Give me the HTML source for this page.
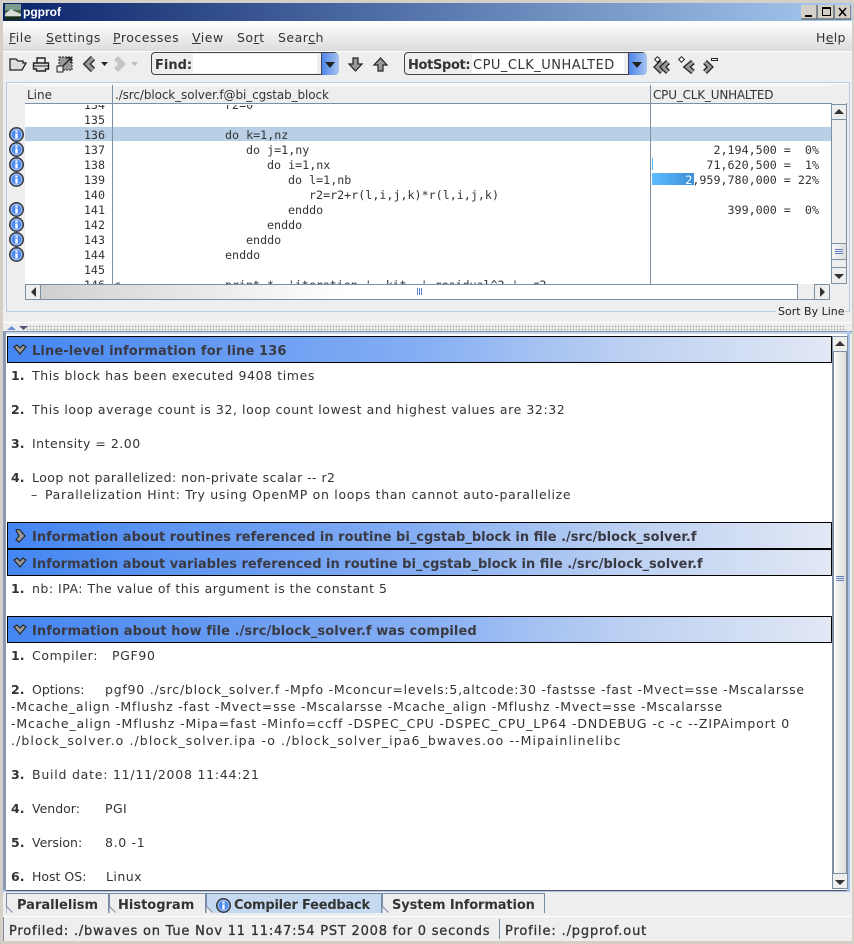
<!DOCTYPE html>
<html><head><meta charset="utf-8"><style>
html,body{margin:0;padding:0;background:#eee}
#w{position:relative;width:854px;height:944px;overflow:hidden;background:#eeeeee;font-family:"DejaVu Sans",sans-serif;font-size:12.5px;color:#333}
.a{position:absolute}
.t{position:absolute;white-space:pre;line-height:16px}
.m{font-family:"DejaVu Sans Mono",monospace;font-size:11.7px;color:#333}
.n{width:50px;text-align:right;left:55px}
.b{font-weight:bold}
.h{position:absolute;left:7px;width:823px;height:25px;border:1px solid #000;background:linear-gradient(90deg,#4486f2 0,#85aef3 50%,#bcd0f2 75%,#e2e8f4 100%);}
.h span{position:absolute;left:24px;top:7px;font-weight:bold;font-size:13px;color:#3a3a44;white-space:pre;line-height:16px}
.u{text-decoration:underline}
.sb{position:absolute;background:#eee;border:1px solid #7d8fa0;box-sizing:border-box}
.tab{position:absolute;top:893px;height:20px;border:1px solid #7a8ca5;border-bottom:0;box-sizing:border-box;font-weight:bold;font-size:13px;color:#333;line-height:24px;white-space:pre;background:#eee;overflow:hidden}
</style></head><body><div id="w">
<!-- frame -->
<div class="a" style="left:0;top:0;width:854px;height:3px;background:#d4d0c8"></div>
<div class="a" style="left:0;top:0;width:3px;height:944px;background:#d4d0c8"></div>
<div class="a" style="right:0;top:0;width:2px;height:944px;background:#d4d0c8"></div>
<div class="a" style="left:0;top:941px;width:854px;height:3px;background:#d4d0c8"></div>
<!-- title -->
<div class="a" style="left:3px;top:3px;width:849px;height:18px;background:linear-gradient(90deg,#0a246a,#a6caf0)"></div>
<svg class="a" style="left:5px;top:4px" width="16" height="16"><rect width="16" height="16" fill="#4a6a50"/><rect width="16" height="6" fill="#7d9a90"/><path d="M0 10L6 5l3 2 7 3v2H0z" fill="#d8dcd8"/><rect y="13" width="16" height="3" fill="#1a2a20"/></svg>
<div class="t b" style="left:23px;top:4px;color:#fff;font-size:12px;font-family:'Liberation Sans',sans-serif">pgprof</div>
<svg class="a" style="left:801px;top:5px" width="50" height="15"><g fill="#d4d0c8"><rect x="0" y="0" width="16" height="14"/><rect x="17" y="0" width="16" height="14"/><rect x="34" y="0" width="16" height="14"/></g><path d="M4 10h7v2H4z" fill="#000"/><path d="M21.500 2.500h8v8h-8z" fill="none" stroke="#000"/><path d="M21 2h9v2h-9z" fill="#000"/><path d="M38 3l7 8M45 3l-7 8" stroke="#000" stroke-width="1.600"/><path d="M0 14h16V0M17 14h16V0M34 14h16V0" fill="none" stroke="#404040"/></svg>
<!-- menu -->
<div class="a" style="left:3px;top:21px;width:849px;height:30px;background:linear-gradient(180deg,#fff,#dcdcdc)"></div>
<div class="t" style="left:9px;top:30px;letter-spacing:.5px"><span class="u">F</span>ile</div>
<div class="t" style="left:46px;top:30px;letter-spacing:.45px"><span class="u">S</span>ettings</div>
<div class="t" style="left:113px;top:30px;letter-spacing:.5px"><span class="u">P</span>rocesses</div>
<div class="t" style="left:192px;top:30px;letter-spacing:.5px"><span class="u">V</span>iew</div>
<div class="t" style="left:237px;top:30px;letter-spacing:.5px">So<span class="u">r</span>t</div>
<div class="t" style="left:278px;top:30px;letter-spacing:.5px">Sear<span class="u">c</span>h</div>
<div class="t" style="left:816px;top:30px;letter-spacing:.3px">H<span class="u">e</span>lp</div>
<!-- toolbar -->
<div class="a" style="left:3px;top:51px;width:849px;height:1px;background:#fff"></div>
<svg class="a" style="left:0;top:48px" width="150" height="34">
<path d="M10 22V11h6l2 2h5v2h3l-4 7z" fill="#ddd" stroke="#222" stroke-width="1.300"/>
<path d="M37 15V10h8v5" fill="#eee" stroke="#222" stroke-width="1.400"/>
<path d="M33.500 15h15v6h-3v2h-9v-2h-3z" fill="#ddd" stroke="#222" stroke-width="1.400"/>
<path d="M34 18h14" stroke="#222"/>
<rect x="59" y="9" width="13" height="13" fill="#999" stroke="#222" stroke-dasharray="2 1"/><rect x="57" y="18" width="6" height="6" fill="#eee" stroke="#222"/><path d="M63 18l8-8M66 10h5v5" stroke="#222" fill="none" stroke-width="1.300"/>
<polyline points="93,10 87,16 93,22" fill="none" stroke="#222" stroke-width="6"/>
<polyline points="93,10 87,16 93,22" fill="none" stroke="#999" stroke-width="3.500"/>
<path d="M101 14h7l-3.500 4z" fill="#223"/>
<polyline points="116,10 122,16 116,22" fill="none" stroke="#c4c4c4" stroke-width="5.500"/>
<path d="M131 14h7l-3.500 4z" fill="#bbb"/>
</svg>
<div class="a" style="left:151px;top:52px;width:187px;height:23px;border:1px solid #444;border-radius:4px;box-sizing:border-box;background:#eee"></div>
<div class="a" style="left:193px;top:54px;width:124px;height:19px;background:#fff"></div>
<div class="t b" style="left:155px;top:58px;font-size:13px;color:#333">Find:</div>
<div class="a" style="left:321px;top:53px;width:17px;height:22px;background:linear-gradient(90deg,#4d87ea,#a9c4f0);border-left:1px solid #445;border-radius:0 4px 4px 0"></div>
<svg class="a" style="left:321px;top:53px" width="18" height="22"><path d="M4 9h10l-5 6z" fill="#222"/></svg>
<svg class="a" style="left:346px;top:55px" width="44" height="20">
<path d="M7 3h5v6h4l-6.500 7-6.500-7h4z" fill="#999" stroke="#222" stroke-width="1.200"/>
<path d="M32 16h5v-6h4l-6.500-7-6.500 7h4z" fill="#999" stroke="#222" stroke-width="1.200"/>
</svg>
<div class="a" style="left:404px;top:52px;width:242px;height:23px;border:1px solid #444;border-radius:4px;box-sizing:border-box;background:#eee"></div>
<div class="a" style="left:472px;top:54px;width:152px;height:19px;background:#fff"></div>
<div class="t b" style="left:408px;top:58px;font-size:13px;color:#333;letter-spacing:-.35px">HotSpot:</div>
<div class="t" style="left:473px;top:58px;font-size:13px;letter-spacing:.5px">CPU_CLK_UNHALTED</div>
<div class="a" style="left:628px;top:53px;width:18px;height:22px;background:linear-gradient(90deg,#4d87ea,#a9c4f0);border-left:1px solid #445;border-radius:0 4px 4px 0"></div>
<svg class="a" style="left:628px;top:53px" width="18" height="22"><path d="M4 9h10l-5 6z" fill="#222"/></svg>
<svg class="a" style="left:652px;top:54px" width="70" height="22">
<g fill="none" stroke="#222" stroke-width="5.500"><polyline points="10,8 5,13 10,18"/><polyline points="16,8 11,13 16,18"/><polyline points="41,8 35,13 41,18"/><polyline points="53,8 58,13 53,18"/></g>
<g fill="none" stroke="#999" stroke-width="3"><polyline points="10,8 5,13 10,18"/><polyline points="16,8 11,13 16,18"/><polyline points="41,8 35,13 41,18"/><polyline points="53,8 58,13 53,18"/></g>
<rect x="3.500" y="3.500" width="4" height="4" fill="#fff" stroke="#222" transform="rotate(45 5.500 5.500)"/>
<rect x="27.500" y="3.500" width="4" height="4" fill="#fff" stroke="#222" transform="rotate(45 29.500 5.500)"/>
<rect x="59.500" y="4.500" width="6" height="2" fill="#fff" stroke="#222"/>
</svg>
<!-- upper panel -->
<div class="a" style="left:6px;top:82px;width:844px;height:230px;border:1px solid #b7cde0;box-sizing:border-box"></div>
<div class="a" style="left:7px;top:83px;width:842px;height:1px;background:#fff"></div>
<div class="a" style="left:25px;top:85px;width:806px;background:#eee;border-bottom:1px solid #7d8fa0;border-top:1px solid #fff;box-sizing:border-box;height:19px"></div>
<div class="a" style="left:25px;top:104px;width:806px;height:180px;background:#fff"></div>
<div class="a" style="left:25px;top:127px;width:806px;height:14px;background:#b8cfe6"></div>
<div class="a" style="left:112px;top:85px;width:1px;height:199px;background:#7d8fa0"></div>
<div class="a" style="left:650px;top:85px;width:1px;height:199px;background:#7d8fa0"></div>
<div class="t" style="left:27px;top:87px;font-size:12px">Line</div>
<div class="t" style="left:115px;top:87px;font-size:12px;letter-spacing:-.1px">./src/block_solver.f@bi_cgstab_block</div>
<div class="t" style="left:653px;top:87px;font-size:12px;letter-spacing:-.2px">CPU_CLK_UNHALTED</div>
<!-- code rows clip -->
<div class="a" style="left:25px;top:105px;width:806px;height:179px;overflow:hidden">
<div class="t m n" style="left:30px;top:-8px">134</div><div class="t m" style="left:200px;top:-8px">r2=0</div>
<div class="t m n" style="left:30px;top:7px">135</div>
<div class="t m n" style="left:30px;top:22px">136</div><div class="t m" style="left:200px;top:22px">do k=1,nz</div>
<div class="t m n" style="left:30px;top:37px">137</div><div class="t m" style="left:221px;top:37px">do j=1,ny</div>
<div class="t m n" style="left:30px;top:52px">138</div><div class="t m" style="left:242px;top:52px">do i=1,nx</div>
<div class="t m n" style="left:30px;top:67px">139</div><div class="t m" style="left:263px;top:67px">do l=1,nb</div>
<div class="t m n" style="left:30px;top:82px">140</div><div class="t m" style="left:284px;top:82px">r2=r2+r(l,i,j,k)*r(l,i,j,k)</div>
<div class="t m n" style="left:30px;top:97px">141</div><div class="t m" style="left:263px;top:97px">enddo</div>
<div class="t m n" style="left:30px;top:112px">142</div><div class="t m" style="left:242px;top:112px">enddo</div>
<div class="t m n" style="left:30px;top:127px">143</div><div class="t m" style="left:221px;top:127px">enddo</div>
<div class="t m n" style="left:30px;top:142px">144</div><div class="t m" style="left:200px;top:142px">enddo</div>
<div class="t m n" style="left:30px;top:157px">145</div>
<div class="t m n" style="left:30px;top:172px">146</div><div class="t m" style="left:89px;top:172px">c</div><div class="t m" style="left:200px;top:172px;letter-spacing:-.05px">print *, 'iteration ', kit, ' residual^2 ', r2</div>
<div class="a" style="left:627px;top:68px;width:42px;height:12px;background:linear-gradient(90deg,#5cbcff,#3f8fd8)"></div>
<div class="a" style="left:627px;top:53px;width:1px;height:12px;background:#5cbcff"></div>
</div>
<div class="t m" style="left:600px;top:142px;width:219px;text-align:right">2,194,500 =  0%</div>
<div class="t m" style="left:600px;top:157px;width:219px;text-align:right">71,620,500 =  1%</div>
<div class="t m" style="left:600px;top:172px;width:219px;text-align:right"><span style="color:#fff">2</span>,959,780,000 = 22%</div>
<div class="t m" style="left:600px;top:202px;width:219px;text-align:right">399,000 =  0%</div>
<!-- gutter icons -->
<svg class="a" style="left:0;top:0;overflow:visible" width="30" height="270">
<defs><g id="ic"><circle cx="7.500" cy="7.500" r="6.800" fill="#4a86f0" stroke="#3a3a3a" stroke-width="1.400"/><circle cx="7.500" cy="7.500" r="5.300" fill="#4d8af2" stroke="#c0cce4" stroke-width=".8"/><rect x="6.300" y="6.500" width="2.400" height="5" fill="#fff"/><rect x="6.300" y="3.500" width="2.400" height="2" fill="#fff"/></g></defs>
<use href="#ic" x="9" y="127"/><use href="#ic" x="9" y="142"/><use href="#ic" x="9" y="157"/><use href="#ic" x="9" y="172"/><use href="#ic" x="9" y="202"/><use href="#ic" x="9" y="217"/><use href="#ic" x="9" y="232"/><use href="#ic" x="9" y="247"/>
</svg>
<!-- v scrollbar upper -->
<div class="a" style="left:831px;top:103px;width:16px;height:181px;background:#eee;border-right:1px solid #7d8fa0;border-left:1px solid #7d8fa0;box-sizing:border-box"></div>
<div class="sb" style="left:831px;top:104px;width:16px;height:16px"></div>
<svg class="a" style="left:831px;top:104px" width="16" height="16"><path d="M3 10h10L8 5z" fill="#333"/></svg>
<div class="sb" style="left:831px;top:243px;width:16px;height:17px;background:linear-gradient(90deg,#f8f8f8,#ddd)"></div>
<div class="a" style="left:835px;top:249px;width:8px;height:1px;background:#5f7fc0;box-shadow:0 2px #5f7fc0,0 4px #5f7fc0"></div>
<div class="sb" style="left:831px;top:267px;width:16px;height:17px"></div>
<svg class="a" style="left:831px;top:268px" width="16" height="16"><path d="M3 6h10l-5 5z" fill="#333"/></svg>
<!-- h scrollbar -->
<div class="a" style="left:25px;top:284px;width:805px;height:16px;background:#fff;border-top:1px solid #7d8fa0;border-bottom:1px solid #7d8fa0;box-sizing:border-box"></div>
<div class="a" style="left:41px;top:285px;width:756px;height:14px;background:linear-gradient(90deg,#d0d0d0,#fff 40%)"></div>
<div class="a" style="left:25px;top:284px;width:16px;height:16px;background:#eee;border:1px solid #7d8fa0;box-sizing:border-box"></div>
<svg class="a" style="left:25px;top:284px" width="16" height="16"><path d="M11 3v10L6 8z" fill="#333"/></svg>
<div class="a" style="left:797px;top:284px;width:17px;height:16px;background:#eee;border-left:1px solid #7d8fa0;border-bottom:1px solid #7d8fa0;box-sizing:border-box"></div>
<div class="a" style="left:814px;top:284px;width:16px;height:16px;background:#eee;border:1px solid #7d8fa0;box-sizing:border-box"></div>
<svg class="a" style="left:814px;top:284px" width="16" height="16"><path d="M6 3v10l5-5z" fill="#333"/></svg>
<div class="a" style="left:417px;top:288px;width:5px;height:7px;background:repeating-linear-gradient(90deg,#5f7fc0 0 1px,transparent 1px 2px)"></div>
<div class="a" style="left:776px;top:304px;width:69px;height:15px;background:#eee"></div>
<div class="t" style="left:778px;top:304px;font-size:11px;color:#222">Sort By Line</div>
<!-- splitter -->
<div class="a" style="left:3px;top:322px;width:849px;height:1px;background:#fff"></div>
<div class="a" style="left:26px;top:325px;width:820px;height:5px;background:radial-gradient(circle,#999 .6px,transparent .9px) 0 0/3px 3px"></div>
<svg class="a" style="left:6px;top:323px" width="22" height="8"><path d="M1 7h9L5.500 3z" fill="#6c90d8"/><path d="M13 3h9l-4.500 4z" fill="#557"/></svg>
<!-- lower panel -->
<div class="a" style="left:3px;top:331px;width:849px;height:3px;background:#c8d8ec;border-top:1px solid #8090a8;box-sizing:border-box"></div>
<div class="a" style="left:3px;top:331px;width:3px;height:561px;background:#8a9ab0"></div>
<div class="a" style="left:847px;top:331px;width:3px;height:561px;background:#a8c4e8"></div>
<div class="a" style="left:3px;top:890px;width:847px;height:2px;background:#a8c4e8"></div>
<div class="a" style="left:6px;top:334px;width:841px;height:556px;background:#fff;border-bottom:1px solid #556"></div>
<div class="h" style="top:336px"><svg class="a" style="left:5px;top:7px" width="14" height="12"><path d="M1 3l3-2 3 3 3-3 3 2-6 7z" fill="#999" stroke="#222" stroke-width="1.100"/></svg><span style="letter-spacing:.12px">Line-level information for line 136</span></div>
<div class="t b" style="left:11px;top:368px">1.</div><div class="t" style="left:32px;top:368px;letter-spacing:.59px">This block has been executed 9408 times</div>
<div class="t b" style="left:11px;top:402px">2.</div><div class="t" style="left:32px;top:402px;letter-spacing:.57px">This loop average count is 32, loop count lowest and highest values are 32:32</div>
<div class="t b" style="left:11px;top:436px">3.</div><div class="t" style="left:32px;top:436px;letter-spacing:.5px">Intensity = 2.00</div>
<div class="t b" style="left:11px;top:470px">4.</div><div class="t" style="left:32px;top:470px;letter-spacing:.45px">Loop not parallelized: non-private scalar -- r2</div>
<div class="t" style="left:31px;top:487px">–</div><div class="t" style="left:45px;top:487px;letter-spacing:.69px">Parallelization Hint: Try using OpenMP on loops than cannot auto-parallelize</div>
<div class="h" style="top:522px"><svg class="a" style="left:6px;top:6px" width="12" height="14"><path d="M2 1l3-1 6 7-6 6-3-2 3-4z" fill="#999" stroke="#222" stroke-width="1.100"/></svg><span>Information about routines referenced in routine bi_cgstab_block in file ./src/block_solver.f</span></div>
<div class="h" style="top:549px"><svg class="a" style="left:5px;top:7px" width="14" height="12"><path d="M1 3l3-2 3 3 3-3 3 2-6 7z" fill="#999" stroke="#222" stroke-width="1.100"/></svg><span>Information about variables referenced in routine bi_cgstab_block in file ./src/block_solver.f</span></div>
<div class="t b" style="left:11px;top:581px">1.</div><div class="t" style="left:32px;top:581px;letter-spacing:.5px">nb: IPA: The value of this argument is the constant 5</div>
<div class="h" style="top:616px"><svg class="a" style="left:5px;top:7px" width="14" height="12"><path d="M1 3l3-2 3 3 3-3 3 2-6 7z" fill="#999" stroke="#222" stroke-width="1.100"/></svg><span style="letter-spacing:.08px">Information about how file ./src/block_solver.f was compiled</span></div>
<div class="t b" style="left:11px;top:648px">1.</div><div class="t" style="left:32px;top:648px;letter-spacing:.65px">Compiler:   PGF90</div>
<div class="t b" style="left:11px;top:682px">2.</div><div class="t" style="left:32px;top:682px">Options:</div><div class="t" style="left:105px;top:682px;letter-spacing:.76px">pgf90 ./src/block_solver.f -Mpfo -Mconcur=levels:5,altcode:30 -fastsse -fast -Mvect=sse -Mscalarsse</div>
<div class="t" style="left:11px;top:699px;letter-spacing:.79px">-Mcache_align -Mflushz -fast -Mvect=sse -Mscalarsse -Mcache_align -Mflushz -Mvect=sse -Mscalarsse</div>
<div class="t" style="left:11px;top:716px;letter-spacing:.87px">-Mcache_align -Mflushz -Mipa=fast -Minfo=ccff -DSPEC_CPU -DSPEC_CPU_LP64 -DNDEBUG -c -c --ZIPAimport 0</div>
<div class="t" style="left:11px;top:733px;letter-spacing:1.09px">./block_solver.o ./block_solver.ipa -o ./block_solver_ipa6_bwaves.oo --Mipainlinelibc</div>
<div class="t b" style="left:11px;top:767px">3.</div><div class="t" style="left:32px;top:767px;letter-spacing:.77px">Build date: 11/11/2008 11:44:21</div>
<div class="t b" style="left:11px;top:801px">4.</div><div class="t" style="left:32px;top:801px">Vendor:</div><div class="t" style="left:105px;top:801px;letter-spacing:.4px">PGI</div>
<div class="t b" style="left:11px;top:835px">5.</div><div class="t" style="left:32px;top:835px">Version:</div><div class="t" style="left:105px;top:835px;letter-spacing:.67px">8.0 -1</div>
<div class="t b" style="left:11px;top:869px">6.</div><div class="t" style="left:32px;top:869px">Host OS:</div><div class="t" style="left:106px;top:869px;letter-spacing:.45px">Linux</div>
<!-- lower scrollbar -->
<div class="a" style="left:832px;top:336px;width:16px;height:553px;background:#f0f0f0;border:1px solid #7d8fa0;box-sizing:border-box"></div>
<div class="sb" style="left:832px;top:336px;width:16px;height:16px"></div>
<svg class="a" style="left:832px;top:336px" width="16" height="16"><path d="M3 10h10L8 5z" fill="#333"/></svg>
<div class="a" style="left:833px;top:352px;width:14px;height:521px;border-left:1px solid #7d8fa0;border-right:1px solid #7d8fa0;box-sizing:border-box;background:linear-gradient(90deg,#fafafa,#ddd)"></div>
<div class="a" style="left:836px;top:576px;width:8px;height:1px;background:#5f7fc0;box-shadow:0 2px #5f7fc0,0 4px #5f7fc0"></div>
<div class="sb" style="left:832px;top:873px;width:16px;height:16px"></div>
<svg class="a" style="left:832px;top:874px" width="16" height="16"><path d="M3 6h10l-5 5z" fill="#333"/></svg>
<!-- tabs -->
<div class="a" style="left:3px;top:892px;width:849px;height:24px;background:#eee"></div>
<div class="tab" style="left:6px;width:103px;padding-left:10px">Parallelism</div>
<div class="tab" style="left:109px;width:97px;padding-left:8px">Histogram</div>
<div class="tab" style="left:206px;width:176px;padding-left:27px;background:#c5daf0;letter-spacing:-.22px">Compiler Feedback</div>
<svg class="a" style="left:216px;top:898px" width="15" height="15"><use href="#ic"/></svg>
<div class="tab" style="left:382px;width:163px;padding-left:9px;letter-spacing:-.12px">System Information</div>
<svg class="a" style="left:0;top:893px" width="400" height="21"><g fill="#eee"><path d="M6.500 14l6 6h-6z"/><path d="M109.500 14l6 6h-6z"/><path d="M206.500 14l6 6h-6z"/><path d="M382.500 14l6 6h-6z"/></g><path d="M6.500 13.500l6 6M109.500 13.500l6 6M206.500 13.500l6 6M382.500 13.500l6 6" stroke="#7a8ca5" fill="none"/></svg>
<!-- status -->
<div class="a" style="left:3px;top:916px;width:849px;height:1px;background:#fff"></div>
<div class="a" style="left:3px;top:917px;width:1px;height:24px;background:#889"></div>
<div class="t" style="left:9px;top:924px;font-size:13px;color:#333;-webkit-text-stroke:.3px #333;letter-spacing:.78px">Profiled: ./bwaves on Tue Nov 11 11:47:54 PST 2008 for 0 seconds</div>
<div class="a" style="left:499px;top:919px;width:1px;height:20px;background:#7a8ca5"></div>
<div class="t" style="left:505px;top:924px;font-size:13px;color:#333;-webkit-text-stroke:.3px #333;letter-spacing:.85px">Profile: ./pgprof.out</div>
</div></body></html>
